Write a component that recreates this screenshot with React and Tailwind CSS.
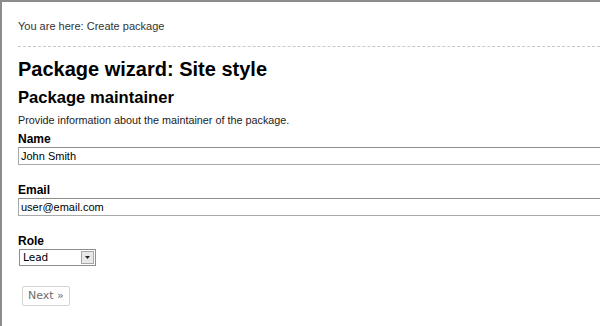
export default function App() {
  return (
    <div className="h-[326px] w-[600px] overflow-hidden bg-white">
      <div className="h-full border-l-2 border-t-2 border-[#8c8c8c] pl-4 pt-[16px] font-['Liberation_Sans',Arial,sans-serif] text-black">
        <p className="text-[11px] leading-[16px] text-[#333]">You are here: Create package</p>
        <div className="mt-[12px] border-t border-dashed border-[#c8c8c8]" />

        <h1 className="mt-[10px] text-[20px] font-bold leading-[24px]">Package wizard: Site style</h1>
        <h2 className="mt-[6px] text-[16.6px] font-bold leading-[21px]">Package maintainer</h2>
        <p className="mt-[5px] text-[10.8px] leading-[14px] text-[#222]">
          Provide information about the maintainer of the package.
        </p>

        <form className="mt-[5px]">
          <label className="block text-[12px] font-bold leading-[15px]">Name</label>
          <input
            defaultValue="John Smith"
            className="block h-[18px] w-[600px] border border-[#a9a9a9] border-t-[#8e8e8e] px-[2px] text-[11px] text-black outline-none"
          />

          <label className="mt-[18px] block text-[12px] font-bold leading-[15px]">Email</label>
          <input
            defaultValue="user@email.com"
            className="block h-[18px] w-[600px] border border-[#a9a9a9] border-t-[#8e8e8e] px-[2px] text-[11px] text-black outline-none"
          />

          <label className="mt-[18px] block text-[12px] font-bold leading-[15px]">Role</label>
          <div className="ml-[1px] flex h-[17px] w-[77px] items-center border border-[#8e8e8e] bg-white">
            <span className="flex-1 pl-[3px] font-['DejaVu_Sans',Verdana,sans-serif] text-[10.5px] leading-none">Lead</span>
            <span className="mr-[1px] flex h-[13px] w-[13px] items-center justify-center border border-[#a8a8a8] bg-[#e8e8e8]">
              <svg width="5" height="3" viewBox="0 0 5 3">
                <path d="M0 0h5L2.5 3z" fill="#222" />
              </svg>
            </span>
          </div>

          <button
            type="button"
            className="ml-[4px] mt-[20px] block h-[20px] rounded-[2px] border border-[#d4d4d4] bg-white px-[5px] font-['DejaVu_Sans',Verdana,sans-serif] text-[11px] text-[#6d6d6d]"
          >
            Next »
          </button>
        </form>
      </div>
    </div>
  );
}
